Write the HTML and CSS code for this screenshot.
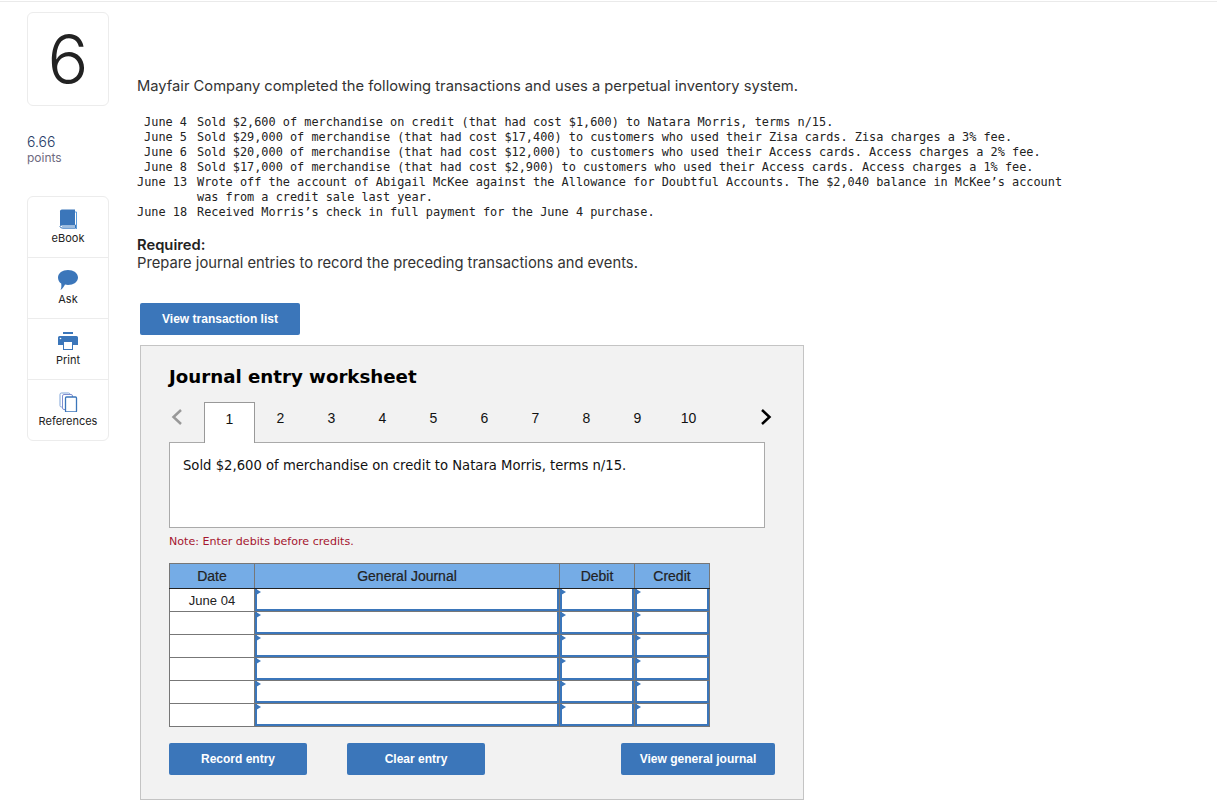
FILE: index.html
```html
<!DOCTYPE html>
<html lang="en">
<head>
<meta charset="utf-8">
<title>Journal entry worksheet</title>
<link rel="stylesheet" href="styles.css">
</head>
<body>
<div class="page">
  <aside class="side">
    <div class="qnum">6</div>
    <div class="points"><div class="pts-value">6.66</div><div class="pts-label">points</div></div>
    <nav class="tools">
      <div class="tool">
        <svg class="tool-icon" width="20" height="20" viewBox="0 0 20 20"><path d="M17 3h1.500v17H4.500" fill="none" stroke="#5a9bdc" stroke-width="1"/><path d="M2 3a2 2 0 0 1 2-2.500h13V16H4a2 2 0 0 0-2 2z" fill="#3b76ba"/><path d="M2 17.500a2 2 0 0 1 2-1.500h13.500v3H4a2 2 0 0 1-2-1.500z" fill="#fff" stroke="#3b76ba"/><path d="M4 17.500h13" stroke="#9dbfe3"/></svg>
        <span>eBook</span>
      </div>
      <div class="tool">
        <svg class="tool-icon" width="20" height="20" viewBox="0 0 20 20"><path d="M10 0c5.500 0 10 3 10 7.500S15.500 15 10 15c-1 0-2-.1-3-.4C6 16.500 4.500 19 2.500 20c1-2 1-4 .7-6.500C1.200 12.300 0 10 0 7.500 0 3 4.500 0 10 0z" fill="#3b76ba"/></svg>
        <span>Ask</span>
      </div>
      <div class="tool">
        <svg class="tool-icon" width="20" height="20" viewBox="0 0 20 20"><rect x="5" y="1" width="10" height="2" fill="#3b76ba"/><path d="M1.500 5h17A1.500 1.500 0 0 1 20 6.500V14h-5v-4H5v4H0V6.500A1.500 1.500 0 0 1 1.500 5z" fill="#3b76ba"/><rect x="5.500" y="10.500" width="9" height="8" fill="#fff" stroke="#3b76ba"/><circle cx="2.500" cy="7.500" r=".8" fill="#fff"/></svg>
        <span>Print</span>
      </div>
      <div class="tool">
        <svg class="tool-icon" width="20" height="20" viewBox="0 0 20 20"><rect x="2" y="1" width="10" height="14" rx="1.500" fill="#fff" stroke="#7fa5d8"/><rect x="4.500" y="2.500" width="10" height="15" rx="1.500" fill="#fff" stroke="#7f8fd0"/><rect x="7.500" y="5" width="11" height="15" rx="1" fill="#fff" stroke="#3b76ba" stroke-width="1.300"/></svg>
        <span>References</span>
      </div>
    </nav>
  </aside>
  <main class="main">
    <p class="intro">Mayfair Company completed the following transactions and uses a perpetual inventory system.</p>
    <div class="trans">
      <div class="t-row"><span class="t-date">June 4</span><span>Sold $2,600 of merchandise on credit (that had cost $1,600) to Natara Morris, terms n/15.</span></div>
      <div class="t-row"><span class="t-date">June 5</span><span>Sold $29,000 of merchandise (that had cost $17,400) to customers who used their Zisa cards. Zisa charges a 3% fee.</span></div>
      <div class="t-row"><span class="t-date">June 6</span><span>Sold $20,000 of merchandise (that had cost $12,000) to customers who used their Access cards. Access charges a 2% fee.</span></div>
      <div class="t-row"><span class="t-date">June 8</span><span>Sold $17,000 of merchandise (that had cost $2,900) to customers who used their Access cards. Access charges a 1% fee.</span></div>
      <div class="t-row"><span class="t-date">June 13</span><span>Wrote off the account of Abigail McKee against the Allowance for Doubtful Accounts. The $2,040 balance in McKee’s account<br>was from a credit sale last year.</span></div>
      <div class="t-row"><span class="t-date">June 18</span><span>Received Morris’s check in full payment for the June 4 purchase.</span></div>
    </div>
    <p class="req"><strong>Required:</strong><br>Prepare journal entries to record the preceding transactions and events.</p>
    <button class="btn btn-list">View transaction list</button>
    <section class="sheet">
      <h2 class="sheet-title">Journal entry worksheet</h2>
      <div class="tabs">
        <svg class="arrow" width="14" height="18" viewBox="0 0 14 18"><path d="M11 2 3.500 9 11 16" fill="none" stroke="#999" stroke-width="2.500"/></svg>
        <div class="tab tab-on">1</div><div class="tab">2</div><div class="tab">3</div><div class="tab">4</div><div class="tab">5</div><div class="tab">6</div><div class="tab">7</div><div class="tab">8</div><div class="tab">9</div><div class="tab">10</div>
        <svg class="arrow arrow-next" width="14" height="18" viewBox="0 0 14 18"><path d="M3 2 10.500 9 3 16" fill="none" stroke="#000" stroke-width="2.500"/></svg>
      </div>
      <div class="desc">Sold $2,600 of merchandise on credit to Natara Morris, terms n/15.</div>
      <p class="note">Note: Enter debits before credits.</p>
      <table class="journal">
        <colgroup><col class="c-date"><col class="c-acct"><col class="c-debit"><col class="c-credit"></colgroup>
        <thead><tr><th>Date</th><th>General Journal</th><th>Debit</th><th>Credit</th></tr></thead>
        <tbody>
          <tr><td class="date">June 04</td><td class="in"></td><td class="in"></td><td class="in"></td></tr>
          <tr><td class="date"></td><td class="in"></td><td class="in"></td><td class="in"></td></tr>
          <tr><td class="date"></td><td class="in"></td><td class="in"></td><td class="in"></td></tr>
          <tr><td class="date"></td><td class="in"></td><td class="in"></td><td class="in"></td></tr>
          <tr><td class="date"></td><td class="in"></td><td class="in"></td><td class="in"></td></tr>
          <tr><td class="date"></td><td class="in"></td><td class="in"></td><td class="in"></td></tr>
        </tbody>
      </table>
      <div class="actions">
        <button class="btn btn-a">Record entry</button>
        <button class="btn btn-a btn-clear">Clear entry</button>
        <button class="btn btn-j">View general journal</button>
      </div>
    </section>
  </main>
</div>
</body>
</html>
```
FILE: styles.css
```css
* { box-sizing: border-box; }
html, body { margin: 0; padding: 0; background: #fff; }
body { height: 802px; overflow: hidden; font-family: "Inter", "Liberation Sans", sans-serif; color: #222; }
.page { display: flex; border-top: 1px solid #eaeaea; margin-top: 1px; height: 801px; overflow: hidden; }
.side { width: 82px; margin-left: 27px; padding-top: 10px; flex: none; }
.qnum { height: 94px; border: 1px solid #ececec; border-radius: 6px; font-weight: 300; font-size: 68px; line-height: 92px; text-align: center; color: #222; }
.points { margin-top: 27px; }
.pts-value { font-size: 14px; color: #2a3f6a; line-height: 17px; font-weight: 300; }
.pts-label { font-size: 12px; line-height: 16px; color: #6e6a80; }
.tools { margin-top: 30px; border: 1px solid #ececec; border-radius: 6px; }
.tool { height: 61px; border-bottom: 1px solid #ececec; display: flex; flex-direction: column; align-items: center; padding-top: 12px; font-size: 11px; color: #222; line-height: 15px; }
.tool:last-child { border-bottom: 0; height: 60px; }
.tool-icon { display: block; margin-bottom: 2px; }
.main { margin-left: 28px; flex: 1; min-width: 0; }
.intro { margin: 74px 0 0; font-size: 14.730px; line-height: 20px; color: #333; }
.trans { margin: 19px 0 0; font-family: "DejaVu Sans Mono", monospace; font-size: 11.880px; line-height: 15px; color: #222; }
.t-row { display: flex; white-space: pre; }
.t-date { width: 50px; margin-right: 10px; text-align: right; flex: none; }
.req { margin: 16px 0 0; font-size: 14.750px; line-height: 18px; color: #333; }
.req strong { font-weight: 600; color: #222; }
.btn { display: block; border: 0; border-radius: 2px; background: #3b76ba; color: #fff; font-family: "Liberation Sans", sans-serif; font-weight: 700; font-size: 12px; height: 32px; padding: 0; cursor: pointer; }
.btn-list { margin: 31px 0 0 3px; width: 160px; }
.sheet { margin: 10px 0 0 3px; width: 664px; height: 455px; background: #f2f2f2; border: 1px solid #c4c4c4; padding: 0 28px; }
.sheet-title { margin: 18px 0 0; font-family: "DejaVu Sans", sans-serif; font-size: 18.200px; line-height: 26px; font-weight: 700; color: #000; }
.tabs { display: flex; margin-top: 12px; height: 41px; position: relative; z-index: 1; }
.arrow { flex: none; margin: 6px 20px 0 1px; }
.arrow-next { margin: 6px 0 0 45px; }
.tab { width: 51px; height: 41px; display: flex; align-items: center; justify-content: center; padding-bottom: 9px; font-family: "Liberation Sans", sans-serif; font-size: 14px; color: #111; }
.tab-on { background: #fff; border: 1px solid #999; border-bottom: 0; height: 41px; }
.desc { width: 596px; height: 86px; margin-top: -1px; background: #fff; border: 1px solid #aaa; padding: 14px 13px 0; font-family: "DejaVu Sans", sans-serif; font-size: 13.200px; line-height: 17px; color: #111; }
.note { margin: 7px 0 0; font-family: "DejaVu Sans", sans-serif; font-size: 11.100px; line-height: 14px; color: #a5152f; }
.journal { margin-top: 14px; border-collapse: collapse; table-layout: fixed; width: 540px; font-family: "Liberation Sans", sans-serif; font-size: 14px; }
.c-date { width: 85px; }
.c-acct { width: 305px; }
.c-debit { width: 75px; }
.c-credit { width: 75px; }
.journal th { height: 25px; background: #75ace6; border: 1px solid #777; border-left-color: #222; border-bottom-color: #222; font-weight: 400; color: #222; padding: 0; -webkit-text-stroke: .2px #222; }
.journal th:first-child { border-left-color: #777; }
.journal td { height: 23px; border: 1px solid #777; padding: 0; background: #fff; }
.journal .date { text-align: center; color: #222; font-size: 13px; }
.in { position: relative; box-shadow: inset 2px 0 #3b76ba, inset -2px 0 #3b76ba, inset 0 -2px #3b76ba; }
.in::before { content: ""; position: absolute; left: 1px; top: 0; border-left: 5px solid #3b76ba; border-top: 3.500px solid transparent; border-bottom: 3.500px solid transparent; }
.actions { display: flex; margin-top: 16px; }
.btn-a { width: 138px; }
.btn-clear { margin-left: 40px; }
.btn-j { width: 154px; margin-left: 136px; }
```
